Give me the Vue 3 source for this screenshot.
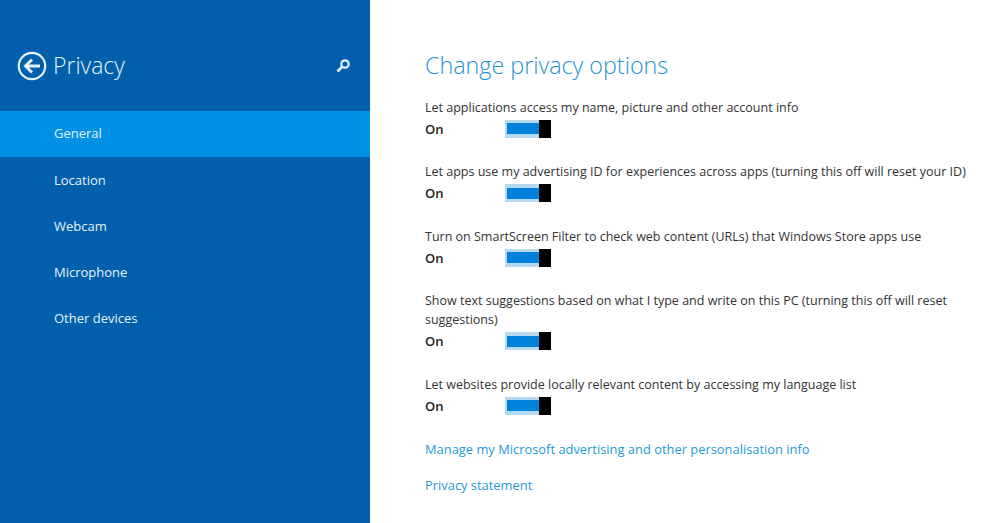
<script setup>
const nav = ['General', 'Location', 'Webcam', 'Microphone', 'Other devices']
const options = [
  'Let applications access my name, picture and other account info',
  'Let apps use my advertising ID for experiences across apps (turning this off will reset your ID)',
  'Turn on SmartScreen Filter to check web content (URLs) that Windows Store apps use',
  'Show text suggestions based on what I type and write on this PC (turning this off will reset suggestions)',
  'Let websites provide locally relevant content by accessing my language list'
]
</script>

<template>
  <div class="page">
    <aside class="side">
      <header class="side-head">
        <svg class="back" width="30" height="30" viewBox="0 0 30 30" fill="none" stroke="#e4f2fb">
          <circle cx="15" cy="15" r="13.2" stroke-width="2.2" />
          <path d="M23 15H9M15 8.5 8.5 15l6.5 6.5" stroke-width="3" />
        </svg>
        <h1 class="side-title">Privacy</h1>
        <svg class="search" width="16" height="16" viewBox="0 0 16 16" fill="none" stroke="#e4f2fb">
          <circle cx="10" cy="6" r="3.7" stroke-width="2.2" />
          <path d="M7.2 8.8 2.5 13.5" stroke-width="2.8" />
        </svg>
      </header>
      <nav class="nav">
        <div v-for="(item, i) in nav" :key="item" class="nav-item" :class="{ active: i === 0 }">{{ item }}</div>
      </nav>
    </aside>
    <main class="main">
      <h2 class="title">Change privacy options</h2>
      <section v-for="text in options" :key="text" class="option">
        <p class="label">{{ text }}</p>
        <div class="state">
          <span class="on">On</span>
          <span class="toggle"><span class="fill"></span><span class="thumb"></span></span>
        </div>
      </section>
      <a class="link first">Manage my Microsoft advertising and other personalisation info</a>
      <a class="link">Privacy statement</a>
    </main>
  </div>
</template>

<style>
html, body { margin: 0; background: #fff; }
</style>

<style scoped>
.page {
  width: 1000px;
  height: 523px;
  display: flex;
  overflow: hidden;
  font-family: "Open Sans", "Noto Sans", sans-serif;
  background: #fff;
}
.side {
  width: 370px;
  flex: none;
  background: #015fac;
  color: #e4f2fb;
}
.side-head {
  height: 111px;
  display: flex;
  align-items: center;
  padding: 20px 19px 0 17px;
  box-sizing: border-box;
}
.side-title {
  margin: 0 0 2px 6px;
  font-size: 23px;
  font-weight: 300;
  line-height: 30px;
}
.search { margin-left: auto; }
.nav-item {
  height: 46px;
  line-height: 46px;
  padding-left: 54px;
  font-size: 13px;
}
.active { background: #0090e6; line-height: 44px; }
.main {
  flex: 1;
  padding: 48px 0 0 55px;
  min-width: 0;
}
.title {
  margin: 0 0 15.5px;
  font-size: 23.3px;
  font-weight: 300;
  line-height: 34px;
  color: #2a93cf;
}
.option { margin-bottom: 21.5px; }
.label {
  margin: 0;
  width: 545px;
  font-size: 12.5px;
  line-height: 19px;
  color: #333;
}
.state {
  display: flex;
  align-items: center;
  height: 24px;
}
.on {
  width: 80px;
  font-size: 13px;
  font-weight: 600;
  color: #222;
}
.toggle {
  width: 46px;
  height: 18px;
  display: flex;
  box-sizing: border-box;
  background: #b5d9f1;
  padding-left: 2px;
  align-items: center;
}
.fill { flex: 1; height: 11px; background: #0082dc; }
.thumb { width: 12px; height: 18px; background: #000; }
.link {
  display: block;
  font-size: 12.9px;
  line-height: 20px;
  color: #1f9ad8;
}
.first { margin: 0 0 16px; }
</style>
